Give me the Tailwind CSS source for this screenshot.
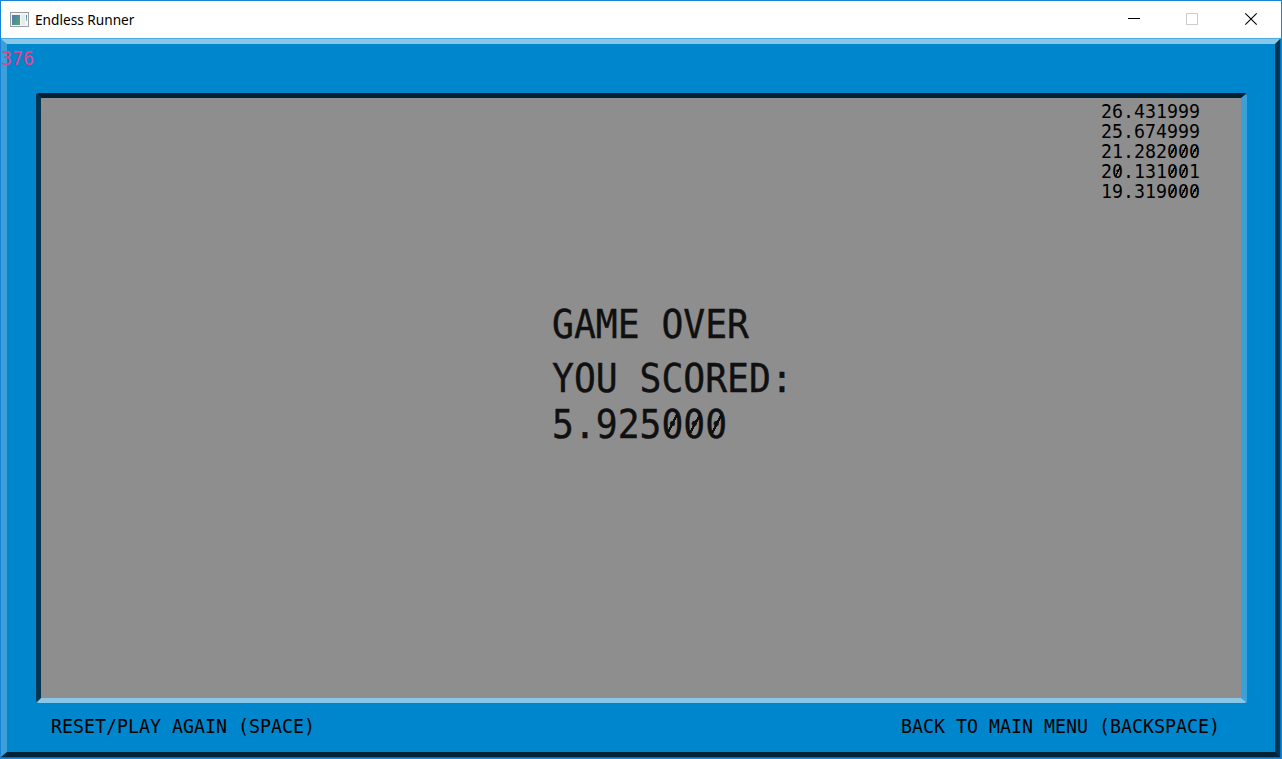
<!DOCTYPE html>
<html lang="en">
<head>
<meta charset="utf-8">
<title>Endless Runner</title>
<script src="https://cdn.jsdelivr.net/npm/@tailwindcss/browser@4"></script>
</head>
<body class="h-[759px] w-[1282px] overflow-hidden bg-white">
<div class="flex h-[759px] w-[1282px] flex-col border border-[#1883d7] bg-white">
  <header class="flex h-[37px] shrink-0 items-center">
    <svg class="ml-[9px] h-4 w-[19px] shrink-0" viewBox="0 0 19 16" shape-rendering="crispEdges">
      <defs><linearGradient id="g" x2="1" y2="1"><stop stop-color="#4f78b4"/><stop offset="1" stop-color="#55a76d"/></linearGradient><linearGradient id="h" x2="0" y2="1"><stop stop-color="#4f78b4"/><stop offset="1" stop-color="#8fc79f"/></linearGradient></defs>
      <rect x=".5" y=".5" width="18" height="14" fill="#f4f5f6" stroke="#9a9fa4"/>
      <rect x="2" y="3" width="8" height="10" fill="url(#g)"/>
      <rect x="11" y="3" width="4" height="10" fill="#e8eaec"/>
      <rect x="16" y="3" width="1" height="6" fill="url(#h)"/>
    </svg>
    <h1 class="ml-[6px] origin-left scale-x-[0.975] whitespace-nowrap font-['Noto_Sans',sans-serif] text-[14px] leading-5 text-black">Endless Runner</h1>
    <svg class="ml-auto h-[37px] w-[174px] shrink-0" viewBox="1107 1 174 37" fill="none">
      <path d="M1128 18.5h12" stroke="#000"/>
      <path d="M1186.5 13.5h11v11h-11z" stroke="#ccc"/>
      <path d="M1245.3 13.3l11.4 11.4M1256.700 13.3l-11.4 11.4" stroke="#000" stroke-width="1.1"/>
    </svg>
  </header>
  <div class="h-[720px] border-t border-[#4aacde] bg-[#0078bb] pr-px pb-px">
  <main class="flex h-[718px] flex-col border-[5px] border-l-[6px] border-t-[#8ac6e6] border-r-[#003653] border-b-[#002234] border-l-[#3b9fd8] bg-[#0086cc] font-['DejaVu_Sans_Mono',monospace] text-[19.2px] leading-5 text-black">
    <div class="h-[49px] shrink-0 pt-[5px]">
      <div class="-ml-[6px] w-[35px] origin-left scale-x-[0.952] text-[#e8408a]">376</div>
    </div>
    <section class="ml-[29px] flex h-[610px] w-[1211px] shrink-0 flex-col rounded-[3px] border-[5px] border-r-[6px] border-t-[#002234] border-r-[#3b9fd8] border-b-[#8ac6e6] border-l-[#003653] bg-[#8e8e8e]">
      <ol class="ml-[1060px] mt-[4px] h-[100px] origin-left scale-x-[0.952] [&_span]:bg-[linear-gradient(to_bottom_right,transparent_43%,#000_43%,#000_57%,transparent_57%)] [&_span]:bg-[length:50%_46%] [&_span]:bg-center [&_span]:bg-no-repeat">
        <li>26.431999</li>
        <li>25.674999</li>
        <li>21.282<span>0</span><span>0</span><span>0</span></li>
        <li>2<span>0</span>.131<span>0</span><span>0</span>1</li>
        <li>19.319<span>0</span><span>0</span><span>0</span></li>
      </ol>
      <div class="ml-[511px] mt-[100px] w-[300px] origin-left scale-x-[0.947] whitespace-nowrap text-[38.4px] leading-[46px] text-[#101010] [-webkit-text-stroke:0.4px_#101010] [&_span]:bg-[linear-gradient(to_bottom_right,transparent_44%,#101010_44%,#101010_56%,transparent_56%)] [&_span]:bg-[length:50%_46%] [&_span]:bg-center [&_span]:bg-no-repeat">
        <p class="mb-[8px]">GAME OVER</p>
        <p>YOU SCORED:</p>
        <p>5.925<span>0</span><span>0</span><span>0</span></p>
      </div>
    </section>
    <footer class="ml-[44px] mt-[14px] flex w-[1169px] justify-between whitespace-nowrap">
      <span class="origin-left scale-x-[0.952]">RESET/PLAY AGAIN (SPACE)</span>
      <span class="origin-right scale-x-[0.952]">BACK TO MAIN MENU (BACKSPACE)</span>
    </footer>
  </main>
  </div>
</div>
</body>
</html>
